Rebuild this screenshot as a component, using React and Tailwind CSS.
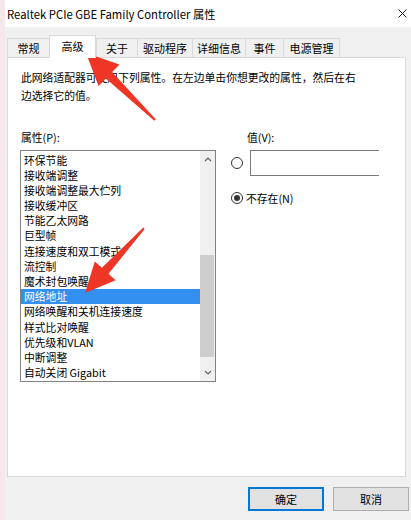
const tabs = [
  { label: '常规', w: 'w-[42px]' },
  { label: '高级', w: 'w-[47px]', active: true },
  { label: '关于', w: 'w-[41px]' },
  { label: '驱动程序', w: 'w-[55px]' },
  { label: '详细信息', w: 'w-[53px]' },
  { label: '事件', w: 'w-[38px]' },
  { label: '电源管理', w: 'w-[57px]' },
];

const props = [
  '环保节能',
  '接收端调整',
  '接收端调整最大伫列',
  '接收缓冲区',
  '节能乙太网路',
  '巨型帧',
  '连接速度和双工模式',
  '流控制',
  '魔术封包唤醒',
  '网络地址',
  '网络唤醒和关机连接速度',
  '样式比对唤醒',
  '优先级和VLAN',
  '中断调整',
  '自动关闭 Gigabit',
];

const Chevron = ({ down }) => (
  <svg className="w-[8px] h-[5px]" viewBox="0 0 8 5" fill="none" stroke="#606060" strokeWidth={1.2}>
    {down ? <path d="M1 1l3 3 3-3" /> : <path d="M1 4l3-3 3 3" />}
  </svg>
);

const Radio = ({ checked }) => (
  <div className="w-[12px] h-[12px] rounded-full border border-[#333] bg-white flex items-center justify-center shrink-0">
    {checked && <div className="w-[6px] h-[6px] rounded-full bg-[#333]" />}
  </div>
);

export default function App() {
  return (
    <div className="relative w-[411px] h-[520px] flex bg-[#f0f0f0] overflow-hidden text-black font-['Noto_Sans_CJK_SC',sans-serif]">
      <div className="w-[5px] bg-[#f6e8ea]" />
      <div className="flex-1 flex flex-col">
        {/* title bar */}
        <div className="h-[27px] bg-white flex items-center justify-between pl-[2px] pr-[4px]">
          <span className="text-[11.3px] leading-[16px]">Realtek PCIe GBE Family Controller 属性</span>
          <svg className="w-[9px] h-[9px]" viewBox="0 0 9 9" stroke="#222" strokeWidth={1}>
            <path d="M0.5 0.5l8 8M8.5 0.5l-8 8" />
          </svg>
        </div>

        {/* tabs */}
        <div className="h-[30px] flex items-end pl-[2px]">
          {tabs.map((t) =>
            t.active ? (
              <div
                key={t.label}
                className={`${t.w} relative z-10 h-[23px] -mb-px bg-white border-x border-t border-[#d9d9d9] flex items-center justify-center text-[11px] leading-[14px] pb-[2px]`}
              >
                {t.label}
              </div>
            ) : (
              <div
                key={t.label}
                className={`${t.w} h-[19px] border-l border-t last:border-r border-[#d9d9d9] flex items-center justify-center text-[11px] leading-[14px]`}
              >
                {t.label}
              </div>
            )
          )}
        </div>

        {/* panel */}
        <div className="h-[420px] bg-white border border-[#d9d9d9] ml-[2px] mr-[5px] pt-[10px] pl-[13px]">
          <p className="text-[10.8px] leading-[18px]">
            此网络适配器可使用下列属性。在左边单击你想更改的属性，然后在右
            <br />
            边选择它的值。
          </p>

          <div className="flex gap-[15px] mt-[25px]">
            <div className="flex flex-col">
              <div className="text-[10.8px] leading-[16px]">属性(P):</div>
              <div className="w-[196px] h-[232px] -ml-px mt-[5px] border border-[#828282] flex">
                <div className="flex-1 pt-[1.5px]">
                  {props.map((p) => (
                    <div
                      key={p}
                      className={`h-[15.2px] leading-[15.2px] pl-[3px] text-[10.8px] whitespace-nowrap ${
                        p === '网络地址' ? 'bg-[#3390f0] text-white' : ''
                      }`}
                    >
                      {p}
                    </div>
                  ))}
                </div>
                <div className="w-[15px] bg-[#f0f0f0] flex flex-col">
                  <div className="h-[17px] flex items-center justify-center">
                    <Chevron />
                  </div>
                  <div className="h-[87px]" />
                  <div className="h-[102px] mr-[1px] bg-[#cdcdcd]" />
                  <div className="flex-1" />
                  <div className="h-[17px] flex items-center justify-center">
                    <Chevron down />
                  </div>
                </div>
              </div>
            </div>

            <div className="flex flex-col">
              <div className="text-[10.8px] leading-[16px] pl-[16px]">值(V):</div>
              <div className="mt-[5px] flex items-center gap-[7px]">
                <Radio />
                <div className="w-[129px] h-[26px] border-y border-l border-[#7a7a7a]" />
              </div>
              <div className="mt-[15px] h-[14px] flex items-center gap-[3px]">
                <Radio checked />
                <span className="text-[10.8px] leading-[14px]">不存在(N)</span>
              </div>
            </div>
          </div>
        </div>

        {/* footer */}
        <div className="flex-1 flex justify-end gap-[9px] pt-[10px] pr-[2px]">
          <button className="w-[76px] h-[24px] bg-[#e1e1e1] border-2 border-[#0078d7] text-[11px] leading-[14px]">
            确定
          </button>
          <button className="w-[76px] h-[24px] bg-[#e1e1e1] border border-[#adadad] text-[11px] leading-[14px]">
            取消
          </button>
        </div>
      </div>

      {/* annotation arrows */}
      <svg className="absolute inset-0 pointer-events-none" width="411" height="520" viewBox="0 0 411 520">
        <polygon
          fill="#ee3526"
          points="86,53 119.5,64.5 112.1,72.1 155.7,119.3 154.3,120.7 105.9,78.5 98.5,86.1"
        />
        <polygon
          fill="#ee3526"
          points="85,293 94.8,261.4 101.9,267.8 143.3,227.6 144.7,228.9 108.5,273.8 115.6,280.2"
        />
      </svg>
    </div>
  );
}
